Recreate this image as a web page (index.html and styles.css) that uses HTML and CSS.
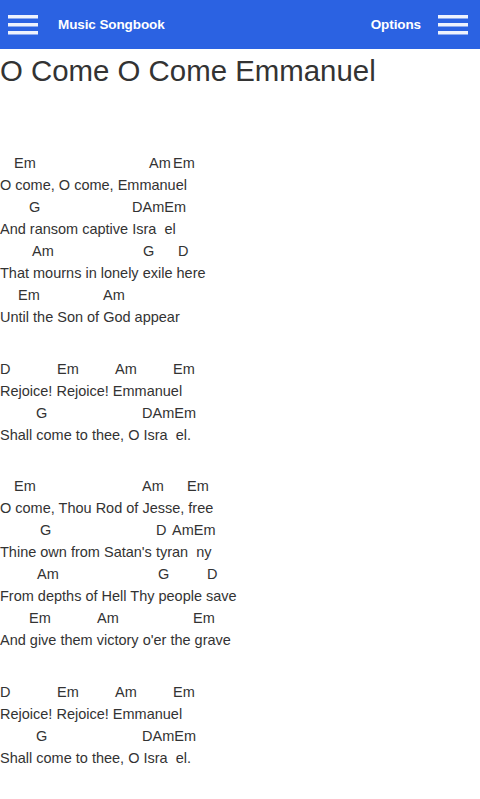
FILE: index.html
```html
<!DOCTYPE html>
<html>
<head>
<meta charset="utf-8">
<link rel="stylesheet" href="styles.css">
</head>
<body>
<header class="bar">
  <div class="bar-left">
    <svg class="menu" width="30" height="20" viewBox="0 0 30 20"><rect x="0" y="0" width="30" height="3.5"/><rect x="0" y="8" width="30" height="3.5"/><rect x="0" y="16" width="30" height="3.5"/></svg>
    <span class="brand">Music Songbook</span>
  </div>
  <div class="bar-right">
    <span class="opt">Options</span>
    <svg class="menu" width="30" height="20" viewBox="0 0 30 20"><rect x="0" y="0" width="30" height="3.5"/><rect x="0" y="8" width="30" height="3.5"/><rect x="0" y="16" width="30" height="3.5"/></svg>
  </div>
</header>
<h1 class="title">O Come O Come Emmanuel</h1>
<main class="song">
  <div class="stanza">
    <div class="chords" style="padding-left:14px"><span class="ch" style="width:135px">Em</span><span class="ch" style="width:24px">Am</span><span class="ch">Em</span></div>
    <div class="lyric">O come, O come, Emmanuel</div>
    <div class="chords" style="padding-left:29px"><span class="ch" style="width:103px">G</span><span class="ch">DAmEm</span></div>
    <div class="lyric">And ransom captive Isra  el</div>
    <div class="chords" style="padding-left:32px"><span class="ch" style="width:111px">Am</span><span class="ch" style="width:35px">G</span><span class="ch">D</span></div>
    <div class="lyric">That mourns in lonely exile here</div>
    <div class="chords" style="padding-left:18px"><span class="ch" style="width:85px">Em</span><span class="ch">Am</span></div>
    <div class="lyric">Until the Son of God appear</div>
  </div>
  <div class="stanza">
    <div class="chords"><span class="ch" style="width:57px">D</span><span class="ch" style="width:58px">Em</span><span class="ch" style="width:58px">Am</span><span class="ch">Em</span></div>
    <div class="lyric">Rejoice! Rejoice! Emmanuel</div>
    <div class="chords" style="padding-left:36px"><span class="ch" style="width:106px">G</span><span class="ch">DAmEm</span></div>
    <div class="lyric">Shall come to thee, O Isra  el.</div>
  </div>
  <div class="stanza">
    <div class="chords" style="padding-left:14px"><span class="ch" style="width:128px">Em</span><span class="ch" style="width:45px">Am</span><span class="ch">Em</span></div>
    <div class="lyric">O come, Thou Rod of Jesse, free</div>
    <div class="chords" style="padding-left:40px"><span class="ch" style="width:116px">G</span><span class="ch" style="width:16px">D</span><span class="ch">AmEm</span></div>
    <div class="lyric">Thine own from Satan's tyran  ny</div>
    <div class="chords" style="padding-left:37px"><span class="ch" style="width:121px">Am</span><span class="ch" style="width:49px">G</span><span class="ch">D</span></div>
    <div class="lyric">From depths of Hell Thy people save</div>
    <div class="chords" style="padding-left:29px"><span class="ch" style="width:68px">Em</span><span class="ch" style="width:96px">Am</span><span class="ch">Em</span></div>
    <div class="lyric">And give them victory o'er the grave</div>
  </div>
  <div class="stanza">
    <div class="chords"><span class="ch" style="width:57px">D</span><span class="ch" style="width:58px">Em</span><span class="ch" style="width:58px">Am</span><span class="ch">Em</span></div>
    <div class="lyric">Rejoice! Rejoice! Emmanuel</div>
    <div class="chords" style="padding-left:36px"><span class="ch" style="width:106px">G</span><span class="ch">DAmEm</span></div>
    <div class="lyric">Shall come to thee, O Isra  el.</div>
  </div>
</main>
</body>
</html>
```
FILE: styles.css
```css
html, body {
  margin: 0;
  padding: 0;
  background: #ffffff;
  font-family: "Liberation Sans", Arial, sans-serif;
  color: #333333;
}
.bar {
  height: 49px;
  background: #2b62e2;
  display: flex;
  align-items: center;
  justify-content: space-between;
  padding: 0 12px 0 8px;
}
.bar-left, .bar-right {
  display: flex;
  align-items: center;
}
.menu {
  fill: #eef2fd;
  display: block;
}
.brand {
  margin-left: 20px;
  color: #ffffff;
  font-weight: bold;
  font-size: 13.5px;
  letter-spacing: -0.1px;
}
.opt {
  margin-right: 17px;
  color: #ffffff;
  font-weight: bold;
  font-size: 13.5px;
  letter-spacing: -0.1px;
}
.title {
  margin: 5px 0 0 0;
  font-size: 29.4px;
  line-height: 33px;
  font-weight: normal;
  color: #333333;
}
.song {
  padding-top: 65px;
  font-size: 14.5px;
  line-height: 22px;
}
.stanza {
  margin-bottom: 29.5px;
}
.chords, .lyric {
  height: 22px;
  white-space: pre;
}
.ch {
  display: inline-block;
}
```
